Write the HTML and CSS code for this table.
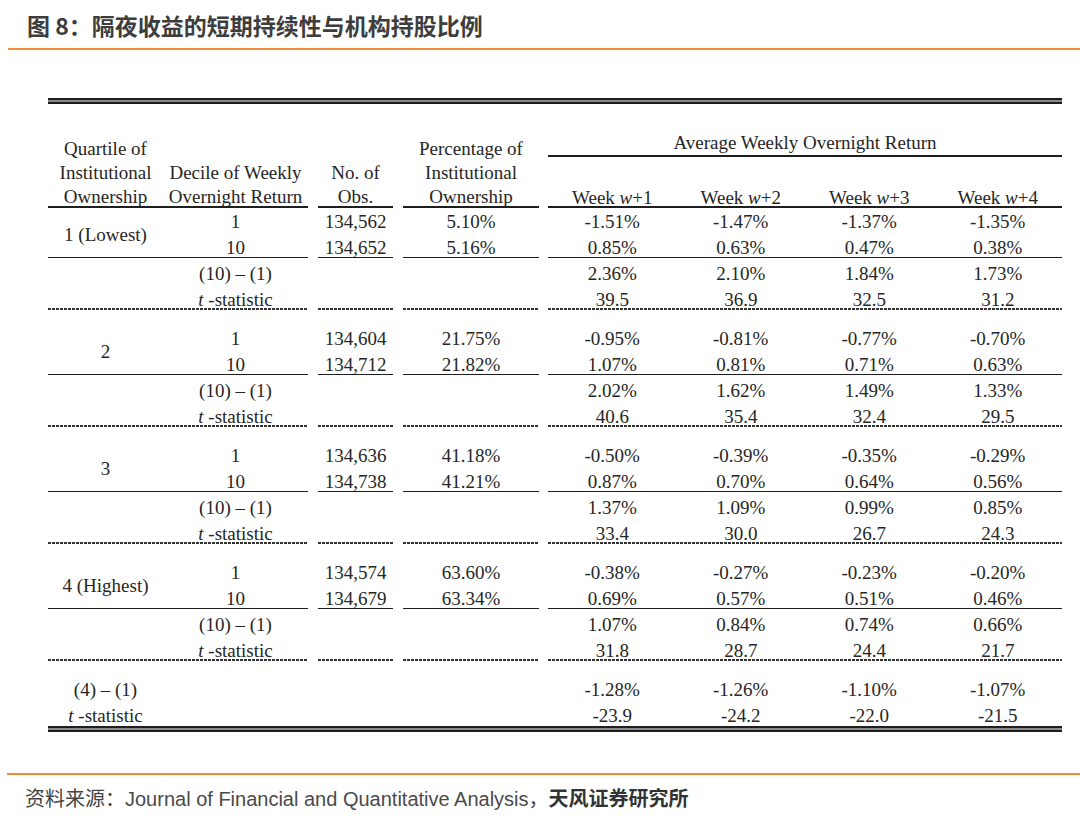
FILE: index.html
```html
<!DOCTYPE html>
<html lang="zh-CN">
<head>
<meta charset="utf-8">
<title>图 8</title>
<link rel="stylesheet" href="styles.css">
</head>
<body>
<div class="title">图 8：隔夜收益的短期持续性与机构持股比例</div>

<div class="tbl">
  <div class="rule-double"></div>

  <div class="grid head">
    <div class="h-left c1">Quartile of<br>Institutional<br>Ownership</div>
    <div class="h-left c2">Decile of Weekly<br>Overnight Return</div>
    <div class="h-left c3">No. of<br>Obs.</div>
    <div class="h-left c4">Percentage of<br>Institutional<br>Ownership</div>
    <div class="h-avg">Average Weekly Overnight Return</div>
    <div class="h-week w1">Week <i>w</i>+1</div>
    <div class="h-week w2">Week <i>w</i>+2</div>
    <div class="h-week w3">Week <i>w</i>+3</div>
    <div class="h-week w4">Week <i>w</i>+4</div>
  </div>

  <!-- Quartile 1 -->
  <div class="grid grp first">
    <div class="q c1">1 (Lowest)</div>
    <div class="r1 c2">1</div><div class="r1 c3">134,562</div><div class="r1 c4">5.10%</div>
    <div class="r1 w1">-1.51%</div><div class="r1 w2">-1.47%</div><div class="r1 w3">-1.37%</div><div class="r1 w4">-1.35%</div>
    <div class="r2 c2">10</div><div class="r2 c3">134,652</div><div class="r2 c4">5.16%</div>
    <div class="r2 w1">0.85%</div><div class="r2 w2">0.63%</div><div class="r2 w3">0.47%</div><div class="r2 w4">0.38%</div>
    <div class="r3 c2">(10) – (1)</div>
    <div class="r3 w1">2.36%</div><div class="r3 w2">2.10%</div><div class="r3 w3">1.84%</div><div class="r3 w4">1.73%</div>
    <div class="r4 c2"><i>t</i> -statistic</div>
    <div class="r4 w1">39.5</div><div class="r4 w2">36.9</div><div class="r4 w3">32.5</div><div class="r4 w4">31.2</div>
    <span class="rule top ra"></span><span class="rule top rb"></span><span class="rule top rc"></span><span class="rule top rd"></span>
    <span class="rule mid ra"></span><span class="rule mid rb"></span><span class="rule mid rc"></span><span class="rule mid rd"></span>
    <span class="rule end ra"></span><span class="rule end rb"></span><span class="rule end rc"></span><span class="rule end rd"></span>
  </div>

  <!-- Quartile 2 -->
  <div class="grid grp">
    <div class="q c1">2</div>
    <div class="r1 c2">1</div><div class="r1 c3">134,604</div><div class="r1 c4">21.75%</div>
    <div class="r1 w1">-0.95%</div><div class="r1 w2">-0.81%</div><div class="r1 w3">-0.77%</div><div class="r1 w4">-0.70%</div>
    <div class="r2 c2">10</div><div class="r2 c3">134,712</div><div class="r2 c4">21.82%</div>
    <div class="r2 w1">1.07%</div><div class="r2 w2">0.81%</div><div class="r2 w3">0.71%</div><div class="r2 w4">0.63%</div>
    <div class="r3 c2">(10) – (1)</div>
    <div class="r3 w1">2.02%</div><div class="r3 w2">1.62%</div><div class="r3 w3">1.49%</div><div class="r3 w4">1.33%</div>
    <div class="r4 c2"><i>t</i> -statistic</div>
    <div class="r4 w1">40.6</div><div class="r4 w2">35.4</div><div class="r4 w3">32.4</div><div class="r4 w4">29.5</div>
    <span class="rule mid ra"></span><span class="rule mid rb"></span><span class="rule mid rc"></span><span class="rule mid rd"></span>
    <span class="rule end ra"></span><span class="rule end rb"></span><span class="rule end rc"></span><span class="rule end rd"></span>
  </div>

  <!-- Quartile 3 -->
  <div class="grid grp">
    <div class="q c1">3</div>
    <div class="r1 c2">1</div><div class="r1 c3">134,636</div><div class="r1 c4">41.18%</div>
    <div class="r1 w1">-0.50%</div><div class="r1 w2">-0.39%</div><div class="r1 w3">-0.35%</div><div class="r1 w4">-0.29%</div>
    <div class="r2 c2">10</div><div class="r2 c3">134,738</div><div class="r2 c4">41.21%</div>
    <div class="r2 w1">0.87%</div><div class="r2 w2">0.70%</div><div class="r2 w3">0.64%</div><div class="r2 w4">0.56%</div>
    <div class="r3 c2">(10) – (1)</div>
    <div class="r3 w1">1.37%</div><div class="r3 w2">1.09%</div><div class="r3 w3">0.99%</div><div class="r3 w4">0.85%</div>
    <div class="r4 c2"><i>t</i> -statistic</div>
    <div class="r4 w1">33.4</div><div class="r4 w2">30.0</div><div class="r4 w3">26.7</div><div class="r4 w4">24.3</div>
    <span class="rule mid ra"></span><span class="rule mid rb"></span><span class="rule mid rc"></span><span class="rule mid rd"></span>
    <span class="rule end ra"></span><span class="rule end rb"></span><span class="rule end rc"></span><span class="rule end rd"></span>
  </div>

  <!-- Quartile 4 -->
  <div class="grid grp">
    <div class="q c1">4 (Highest)</div>
    <div class="r1 c2">1</div><div class="r1 c3">134,574</div><div class="r1 c4">63.60%</div>
    <div class="r1 w1">-0.38%</div><div class="r1 w2">-0.27%</div><div class="r1 w3">-0.23%</div><div class="r1 w4">-0.20%</div>
    <div class="r2 c2">10</div><div class="r2 c3">134,679</div><div class="r2 c4">63.34%</div>
    <div class="r2 w1">0.69%</div><div class="r2 w2">0.57%</div><div class="r2 w3">0.51%</div><div class="r2 w4">0.46%</div>
    <div class="r3 c2">(10) – (1)</div>
    <div class="r3 w1">1.07%</div><div class="r3 w2">0.84%</div><div class="r3 w3">0.74%</div><div class="r3 w4">0.66%</div>
    <div class="r4 c2"><i>t</i> -statistic</div>
    <div class="r4 w1">31.8</div><div class="r4 w2">28.7</div><div class="r4 w3">24.4</div><div class="r4 w4">21.7</div>
    <span class="rule mid ra"></span><span class="rule mid rb"></span><span class="rule mid rc"></span><span class="rule mid rd"></span>
    <span class="rule end ra"></span><span class="rule end rb"></span><span class="rule end rc"></span><span class="rule end rd"></span>
  </div>

  <!-- (4) - (1) -->
  <div class="grid grp last">
    <div class="r1 c1">(4) – (1)</div>
    <div class="r1 w1">-1.28%</div><div class="r1 w2">-1.26%</div><div class="r1 w3">-1.10%</div><div class="r1 w4">-1.07%</div>
    <div class="r2 c1"><i>t</i> -statistic</div>
    <div class="r2 w1">-23.9</div><div class="r2 w2">-24.2</div><div class="r2 w3">-22.0</div><div class="r2 w4">-21.5</div>
  </div>

  <div class="rule-double"></div>
</div>

<div class="source">资料来源：<span class="latin">Journal of Financial and Quantitative Analysis</span>，<b>天风证券研究所</b></div>
</body>
</html>
```

FILE: styles.css
```css
html, body {
  margin: 0;
  padding: 0;
  background: #ffffff;
}

body {
  width: 1080px;
  font-family: "Noto Sans CJK SC", "Noto Sans", sans-serif;
}

.title {
  height: 50px;
  box-sizing: border-box;
  margin-left: 8px;
  padding: 3px 0 0 19px;
  display: flex;
  align-items: center;
  border-bottom: 2px solid #ef8b3a;
  font-family: "Noto Sans CJK SC", sans-serif;
  font-size: 23px;
  font-weight: 700;
  color: #3d3d3d;
  line-height: 1;
}

.tbl {
  margin: 48px 0 0 48px;
  width: 1014px;
  font-family: "Liberation Serif", "Times New Roman", serif;
  font-size: 19px;
  color: #262626;
}

.rule-double {
  height: 2px;
  border-top: 2px solid #1e1e1e;
  border-bottom: 2px solid #1e1e1e;
  background: #8a8a8a;
}

.grid {
  display: grid;
  grid-template-columns: 115px 145px 10px 75px 10px 136px 9px repeat(4, 128.5px);
  text-align: center;
  white-space: nowrap;
}

.c1 { grid-column: 1 / 2; }
.c2 { grid-column: 2 / 3; }
.c3 { grid-column: 4 / 5; }
.c4 { grid-column: 6 / 7; }
.w1 { grid-column: 8 / 9; }
.w2 { grid-column: 9 / 10; }
.w3 { grid-column: 10 / 11; }
.w4 { grid-column: 11 / 12; }

.r1 { grid-row: 1; }
.r2 { grid-row: 2; }
.r3 { grid-row: 3; }
.r4 { grid-row: 4; }

/* header */
.head {
  grid-template-rows: auto auto;
  line-height: 24px;
}

.h-left {
  grid-row: 1 / 3;
  align-self: end;
  margin-bottom: -3px;
}

.h-avg {
  grid-column: 8 / 12;
  grid-row: 1;
  margin-top: 27px;
  border-bottom: 2px solid #1e1e1e;
}

.h-week {
  grid-row: 2;
  padding-top: 29px;
  margin-bottom: -4px;
}

/* body groups */
.grp {
  grid-template-rows: repeat(4, 26px);
  line-height: 21px;
  padding-top: 13px;
}

.grp > div {
  padding-top: 5px;
}

.grp.first {
  padding-top: 0;
}

.grp.last {
  grid-template-rows: repeat(2, 26px);
}

.q {
  grid-row: 1 / 3;
  align-self: center;
}

.rule {
  display: block;
}

.ra { grid-column: 1 / 3; }
.rb { grid-column: 4 / 5; }
.rc { grid-column: 6 / 7; }
.rd { grid-column: 8 / 12; }

.rule.top {
  grid-row: 1;
  align-self: start;
  height: 2px;
  background: #1e1e1e;
}

.rule.mid {
  grid-row: 2;
  align-self: end;
  height: 1px;
  background: #1e1e1e;
}

.rule.end {
  grid-row: 4;
  align-self: end;
  height: 2px;
  background: repeating-linear-gradient(to right, #333 0 3px, transparent 3px 4px);
}

/* source */
.source {
  margin: 41px 0 0 7px;
  padding: 11px 0 0 18px;
  border-top: 2px solid #ef8b3a;
  font-family: "Liberation Sans", "Noto Sans CJK SC", sans-serif;
  font-size: 20px;
  line-height: 24px;
  color: #444;
}

.source .latin {
  font-family: "Liberation Sans", sans-serif;
  color: #4a4a4a;
}

.source b {
  font-family: "Noto Sans CJK SC", sans-serif;
  font-weight: 700;
  color: #333;
}
```
